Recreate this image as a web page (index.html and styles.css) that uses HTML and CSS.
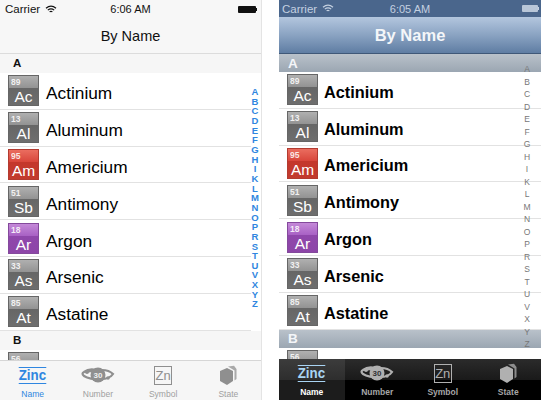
FILE: index.html
```html
<!DOCTYPE html>
<html lang="en">
<head>
<meta charset="utf-8">
<title>By Name</title>
<link rel="stylesheet" href="styles.css">
</head>
<body>
<div class="shot">
  <section class="phone light">
    <div class="status">
      <span class="carrier">Carrier</span>
      <svg class="wifi" width="12" height="9" viewBox="0 0 12 9"><path d="M1 3.2C4 .6 8 .6 11 3.2M2.8 5.1C4.8 3.5 7.2 3.5 9.2 5.1M4.6 6.9C5.5 6.2 6.5 6.2 7.4 6.9" fill="none" stroke="currentColor" stroke-width="1.2"/></svg>
      <span class="time">6:06 AM</span>
      <span class="battery"></span>
    </div>
    <header class="nav">By Name</header>
    <div class="list">
      <div class="section">A</div>
      <div class="row"><div class="tile gray"><b>89</b><i>Ac</i></div><span>Actinium</span></div>
      <div class="row"><div class="tile gray"><b>13</b><i>Al</i></div><span>Aluminum</span></div>
      <div class="row"><div class="tile red"><b>95</b><i>Am</i></div><span>Americium</span></div>
      <div class="row"><div class="tile gray"><b>51</b><i>Sb</i></div><span>Antimony</span></div>
      <div class="row"><div class="tile purple"><b>18</b><i>Ar</i></div><span>Argon</span></div>
      <div class="row"><div class="tile gray"><b>33</b><i>As</i></div><span>Arsenic</span></div>
      <div class="row"><div class="tile gray"><b>85</b><i>At</i></div><span>Astatine</span></div>
      <div class="section">B</div>
      <div class="row"><div class="tile gray"><b>56</b></div></div>
      <div class="index">
        <span>A</span><span>B</span><span>C</span><span>D</span><span>E</span><span>F</span><span>G</span><span>H</span><span>I</span><span>K</span><span>L</span><span>M</span><span>N</span><span>O</span><span>P</span><span>R</span><span>S</span><span>T</span><span>U</span><span>V</span><span>X</span><span>Y</span><span>Z</span>
      </div>
    </div>
    <nav class="tabs">
      <div class="tab active"><div class="tab-icon"><span class="zinc">Zinc</span></div><small>Name</small></div>
      <div class="tab"><div class="tab-icon"><svg width="34" height="18" viewBox="0 0 34 18"><path d="M3 6C7 3 11 3 15 4M21 4C25 4 30 6 32 8C30 11 25 13 20 13C13 14 6 12 3 10C1 8 1 7 3 6Z" fill="none" stroke="currentColor" stroke-width="2.200"/><circle cx="17" cy="9" r="7.500" fill="currentColor"/><circle cx="6" cy="6" r="2" fill="currentColor"/><circle cx="27" cy="12" r="1.800" fill="currentColor"/><text x="17" y="12" class="orbit-num">30</text></svg></div><small>Number</small></div>
      <div class="tab"><div class="tab-icon"><span class="zn">Zn</span></div><small>Symbol</small></div>
      <div class="tab"><div class="tab-icon"><svg width="20" height="21" viewBox="0 0 20 21"><path d="M9 3L15 6V16L9 20L2 16V6Z" fill="currentColor"/><path d="M10 1.500L16 0.800L18.500 4V14L16.500 15.500V5.500Z" fill="currentColor" opacity=".75"/></svg></div><small>State</small></div>
    </nav>
  </section>

  <section class="phone dark">
    <div class="status">
      <span class="carrier">Carrier</span>
      <svg class="wifi" width="12" height="9" viewBox="0 0 12 9"><path d="M1 3.2C4 .6 8 .6 11 3.2M2.8 5.1C4.8 3.5 7.2 3.5 9.2 5.1M4.6 6.9C5.5 6.2 6.5 6.2 7.4 6.9" fill="none" stroke="currentColor" stroke-width="1.2"/></svg>
      <span class="time">6:05 AM</span>
      <span class="battery"></span>
    </div>
    <header class="nav">By Name</header>
    <div class="list">
      <div class="section">A</div>
      <div class="row"><div class="tile gray"><b>89</b><i>Ac</i></div><span>Actinium</span></div>
      <div class="row"><div class="tile gray"><b>13</b><i>Al</i></div><span>Aluminum</span></div>
      <div class="row"><div class="tile red"><b>95</b><i>Am</i></div><span>Americium</span></div>
      <div class="row"><div class="tile gray"><b>51</b><i>Sb</i></div><span>Antimony</span></div>
      <div class="row"><div class="tile purple"><b>18</b><i>Ar</i></div><span>Argon</span></div>
      <div class="row"><div class="tile gray"><b>33</b><i>As</i></div><span>Arsenic</span></div>
      <div class="row"><div class="tile gray"><b>85</b><i>At</i></div><span>Astatine</span></div>
      <div class="section">B</div>
      <div class="row"><div class="tile gray"><b>56</b></div></div>
      <div class="index">
        <span>A</span><span>B</span><span>C</span><span>D</span><span>E</span><span>F</span><span>G</span><span>H</span><span>I</span><span>K</span><span>L</span><span>M</span><span>N</span><span>O</span><span>P</span><span>R</span><span>S</span><span>T</span><span>U</span><span>V</span><span>X</span><span>Y</span><span>Z</span>
      </div>
    </div>
    <nav class="tabs">
      <div class="tab active"><div class="tab-icon"><span class="zinc">Zinc</span></div><small>Name</small></div>
      <div class="tab"><div class="tab-icon"><svg width="34" height="18" viewBox="0 0 34 18"><path d="M3 6C7 3 11 3 15 4M21 4C25 4 30 6 32 8C30 11 25 13 20 13C13 14 6 12 3 10C1 8 1 7 3 6Z" fill="none" stroke="currentColor" stroke-width="2.200"/><circle cx="17" cy="9" r="7.500" fill="currentColor"/><circle cx="6" cy="6" r="2" fill="currentColor"/><circle cx="27" cy="12" r="1.800" fill="currentColor"/><text x="17" y="12" class="orbit-num">30</text></svg></div><small>Number</small></div>
      <div class="tab"><div class="tab-icon"><span class="zn">Zn</span></div><small>Symbol</small></div>
      <div class="tab"><div class="tab-icon"><svg width="20" height="21" viewBox="0 0 20 21"><path d="M9 3L15 6V16L9 20L2 16V6Z" fill="currentColor"/><path d="M10 1.500L16 0.800L18.500 4V14L16.500 15.500V5.500Z" fill="currentColor" opacity=".75"/></svg></div><small>State</small></div>
    </nav>
  </section>
</div>
</body>
</html>
```

FILE: styles.css
```css
* { box-sizing: border-box; }
html, body { margin: 0; padding: 0; background: #fff; }
body { font-family: "Liberation Sans", Arial, sans-serif; overflow: hidden; }

.shot { display: flex; justify-content: space-between; width: 541px; height: 400px; overflow: hidden; }
.phone { display: flex; flex-direction: column; width: 262px; height: 400px; }
.light { border-right: 1px solid #e4e4e4; }

.status { display: flex; align-items: center; position: relative; flex: none; font-size: 11.500px; }
.carrier { margin-left: 5px; }
.wifi { margin-left: 5px; }
.time { position: absolute; left: 0; right: 0; text-align: center; font-size: 11px; }
.battery { position: relative; margin-left: auto; width: 18px; height: 7px; background: currentColor; border-radius: 1px; }
.battery::after { content: ""; position: absolute; left: 100%; top: 2px; width: 1px; height: 3px; background: currentColor; }

.nav { display: flex; align-items: center; justify-content: center; flex: none; }

.list { position: relative; flex: 1; min-height: 0; overflow: hidden; background: #fff; }
.section { display: flex; align-items: center; font-weight: 700; }
.row { display: flex; align-items: center; height: 36.800px; border-bottom: 1px solid #e2e2e2; color: #000; }
.row span { margin: 6px 0 0 7px; }

.tile { display: flex; flex-direction: column; flex: none; width: 31px; height: 31px; border: 1px solid #666; color: #fff; overflow: hidden; }
.tile b { flex: 0 0 13px; padding-left: 2px; font-size: 8.500px; line-height: 12px; font-weight: 700; opacity: .85; }
.tile i { flex: 1; text-align: center; font-style: normal; font-size: 15.500px; line-height: 15px; }
.gray { background: linear-gradient(#b0b0b0, #929292 42%, #666 43%, #6e6e6e); }
.red { background: linear-gradient(#ea6d5f, #d8453a 42%, #c4372c 43%, #c23b2e); border-color: #b33b30; }
.purple { background: linear-gradient(#c489d8, #a860c4 42%, #8f47ab 43%, #8d45a8); border-color: #84499c; }

.index { position: absolute; display: flex; flex-direction: column; align-items: center; }
.index span { display: block; text-align: center; }

.tabs { display: flex; flex: none; height: 40px; }
.tab { display: flex; flex-direction: column; align-items: center; flex: 1; }
.tab-icon { display: flex; align-items: center; justify-content: center; flex: none; height: 28px; }
.tab small { font-size: 8.500px; line-height: 11px; }
.zinc { display: block; padding: 1px 0; border-top: 1px solid currentColor; border-bottom: 1px solid currentColor; font-size: 14px; font-weight: 700; line-height: 13px; transform: scaleX(.95); }
.zn { display: block; width: 18px; height: 19px; border: 1px solid currentColor; text-align: center; font-size: 13px; line-height: 17px; }
.orbit-num { font: 700 8px "Liberation Sans", Arial, sans-serif; text-anchor: middle; }

/* iOS 7 style */
.light { color: #111; }
.light .status { height: 18px; background: #f7f7f7; }
.light .battery { margin-right: 5px; }
.light .nav { height: 36px; background: #f7f7f7; border-bottom: 1px solid #dcdcdc; font-size: 14.500px; }
.light .section { height: 19px; padding: 0 0 1px 13px; background: #f6f6f6; font-size: 11.500px; color: #111; }
.light .row { padding-left: 8px; margin-right: 10px; }
.light .row span { font-size: 17.300px; }
.light .index { top: 33px; right: 0; width: 12px; font-size: 9.500px; line-height: 9.650px; font-weight: 700; color: #2f86e0; }
.light .tabs { background: #f6f6f6; border-top: 1px solid #d6d6d6; color: #8f8f8f; }
.light .active { color: #2f86e0; }
.light .tab small { color: #a0a0a0; }
.light .active small { color: #2f86e0; }
.light .orbit-num { fill: #eee; }

/* iOS 6 style */
.dark { color: #fff; }
.dark .status { height: 17px; background: #4a668c; color: #c4d0e0; }
.dark .carrier { margin-left: 3px; }
.dark .battery { margin-right: 3px; width: 16px; background: #b8c6d8; }
.dark .nav { height: 37px; background: linear-gradient(#b3c6de, #8aa3c2 50%, #5f7da3); border-bottom: 1px solid #3f5878; font-size: 16.500px; font-weight: 700; color: #f4f6f9; }
.dark .section { height: 18px; padding-left: 9px; background: linear-gradient(#b9c1ca, #9ba6b2); font-size: 13.500px; color: #f4f6f9; }
.dark .row { padding-left: 8px; }
.dark .row span { font-size: 16.300px; font-weight: 700; margin: 5px 0 0 6px; }
.dark .index { top: 9px; right: 6px; width: 16px; font-size: 8.500px; line-height: 12.520px; color: #777; }
.dark .tabs { height: 41px; background: linear-gradient(#2b2b2b, #1a1a1a 50%, #000 51%); color: #b0b0b0; }
.dark .active { background: linear-gradient(#3c3c3c, #2e2e2e 50%, #1c1c1c 51%); color: #fff; }
.dark .active .zinc { color: #a9d4f3; }
.dark .tab small { font-weight: 700; color: #a6a6a6; }
.dark .active small { color: #fff; }
.dark .orbit-num { fill: #333; }
```
